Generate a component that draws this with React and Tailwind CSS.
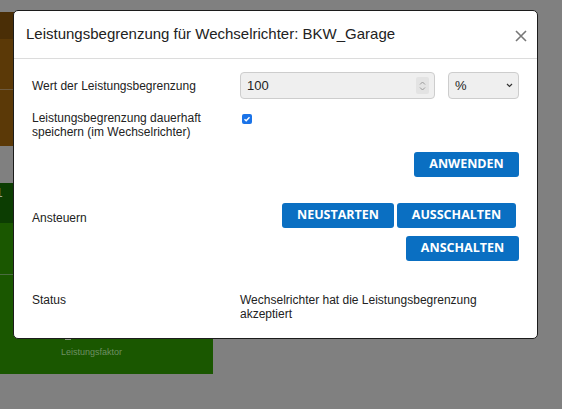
import React from 'react';

function BlueButton({ children, className = '' }) {
  return (
    <button
      className={`h-[25px] rounded-[3px] bg-[#0a6fc2] text-white text-[12.5px] font-bold uppercase font-['Open_Sans',sans-serif] leading-none flex items-center justify-center ${className}`}
    >
      {children}
    </button>
  );
}

export default function App() {
  return (
    <div className="relative w-[562px] h-[409px] overflow-hidden bg-[#808080] font-['Liberation_Sans',Arial,sans-serif]">
      {/* Page behind the overlay */}
      <div className="flex flex-col w-[213px] pt-3">
        <div className="flex flex-col">
          <div className="h-[27px] bg-[#4a2e06]" />
          <div className="h-[51px] bg-[#5b3907] border-b border-[#6d5a3e]" />
          <div className="h-[56px] bg-[#5b3907]" />
        </div>
        <div className="h-[37px]" />
        <div className="flex flex-col">
          <div className="h-[40px] bg-[#0c3d02] overflow-hidden">
            <span className="block -ml-[4px] text-[12px] leading-[20px] text-[#9aa596]">1</span>
          </div>
          <div className="h-[52px] bg-[#1a5700] border-b border-[#4b6c40]" />
          <div className="h-[99px] bg-[#1a5700] flex flex-col pl-[61px] pt-[62px]">
            <div className="ml-[4px] w-[6px] h-[3px] bg-[#8a9a80]" />
            <span className="mt-[6px] text-[9px] text-[#6e8f62]">Leistungsfaktor</span>
          </div>
        </div>
      </div>

      {/* Modal dialog */}
      <div className="absolute left-[13px] top-[10px] w-[525px] h-[329px] bg-white border border-[#1c1c1c] rounded-[5px] flex flex-col">
        <div className="h-[48px] flex items-center justify-between pl-[12px] pr-[10px] border-b border-[#dcdcdc]">
          <h2 className="text-[15px] text-[#222]">Leistungsbegrenzung für Wechselrichter: BKW_Garage</h2>
          <svg width="12" height="12" viewBox="0 0 12 12" className="mt-[2px]">
            <path d="M1 1L11 11M11 1L1 11" stroke="#777" strokeWidth="1.6" />
          </svg>
        </div>

        <div className="pl-[18px] pr-[18px] text-[12px] text-[#222]">
          {/* Wert */}
          <div className="mt-[13px] flex items-center">
            <div className="w-[208px]">Wert der Leistungsbegrenzung</div>
            <div className="w-[195px] h-[27px] flex items-center justify-between pl-[6px] pr-[5px] bg-[#efefef] border border-[#cdcdcd] rounded-[4px] text-[13px]">
              <span>100</span>
              <div className="w-[13px] h-[17px] bg-[#e3e3e3] rounded-[2px] flex items-center justify-center">
                <svg width="7" height="12" viewBox="0 0 7 12">
                  <path d="M1 4.5L3.5 2L6 4.5M1 7.5L3.5 10L6 7.5" stroke="#9a9a9a" strokeWidth="1" fill="none" />
                </svg>
              </div>
            </div>
            <div className="ml-[13px] w-[71px] h-[27px] flex items-center justify-between pl-[6px] pr-[5px] bg-[#efefef] border border-[#cdcdcd] rounded-[4px] text-[13px]">
              <span>%</span>
              <svg width="7" height="5" viewBox="0 0 7 5">
                <path d="M1 1L3.5 3.5L6 1" stroke="#333" strokeWidth="1.2" fill="none" />
              </svg>
            </div>
          </div>

          {/* Dauerhaft speichern */}
          <div className="mt-[12px] flex items-start">
            <div className="w-[200px] mr-[8px] leading-[14px]">Leistungsbegrenzung dauerhaft speichern (im Wechselrichter)</div>
            <div className="ml-[2px] mt-[3px] w-[10px] h-[10px] rounded-[2px] bg-[#1a73e8] flex items-center justify-center">
              <svg width="8" height="8" viewBox="0 0 8 8">
                <path d="M1.5 4.2L3.2 5.8L6.5 2.3" stroke="white" strokeWidth="1.4" fill="none" />
              </svg>
            </div>
          </div>

          <div className="mt-[13px] flex justify-end">
            <BlueButton className="w-[105px]">Anwenden</BlueButton>
          </div>

          {/* Ansteuern */}
          <div className="mt-[26px] flex items-start">
            <div className="w-[208px] pt-[6px]">Ansteuern</div>
            <div className="flex-1 flex flex-wrap justify-end gap-x-[3px] gap-y-2">
              <BlueButton className="w-[112px]">Neustarten</BlueButton>
              <BlueButton className="w-[119px] mr-[3px]">Ausschalten</BlueButton>
              <BlueButton className="w-[113px]">Anschalten</BlueButton>
            </div>
          </div>

          {/* Status */}
          <div className="mt-[32px] flex items-start leading-[14px]">
            <div className="w-[208px]">Status</div>
            <div className="flex-1">Wechselrichter hat die Leistungsbegrenzung akzeptiert</div>
          </div>
        </div>
      </div>
    </div>
  );
}
